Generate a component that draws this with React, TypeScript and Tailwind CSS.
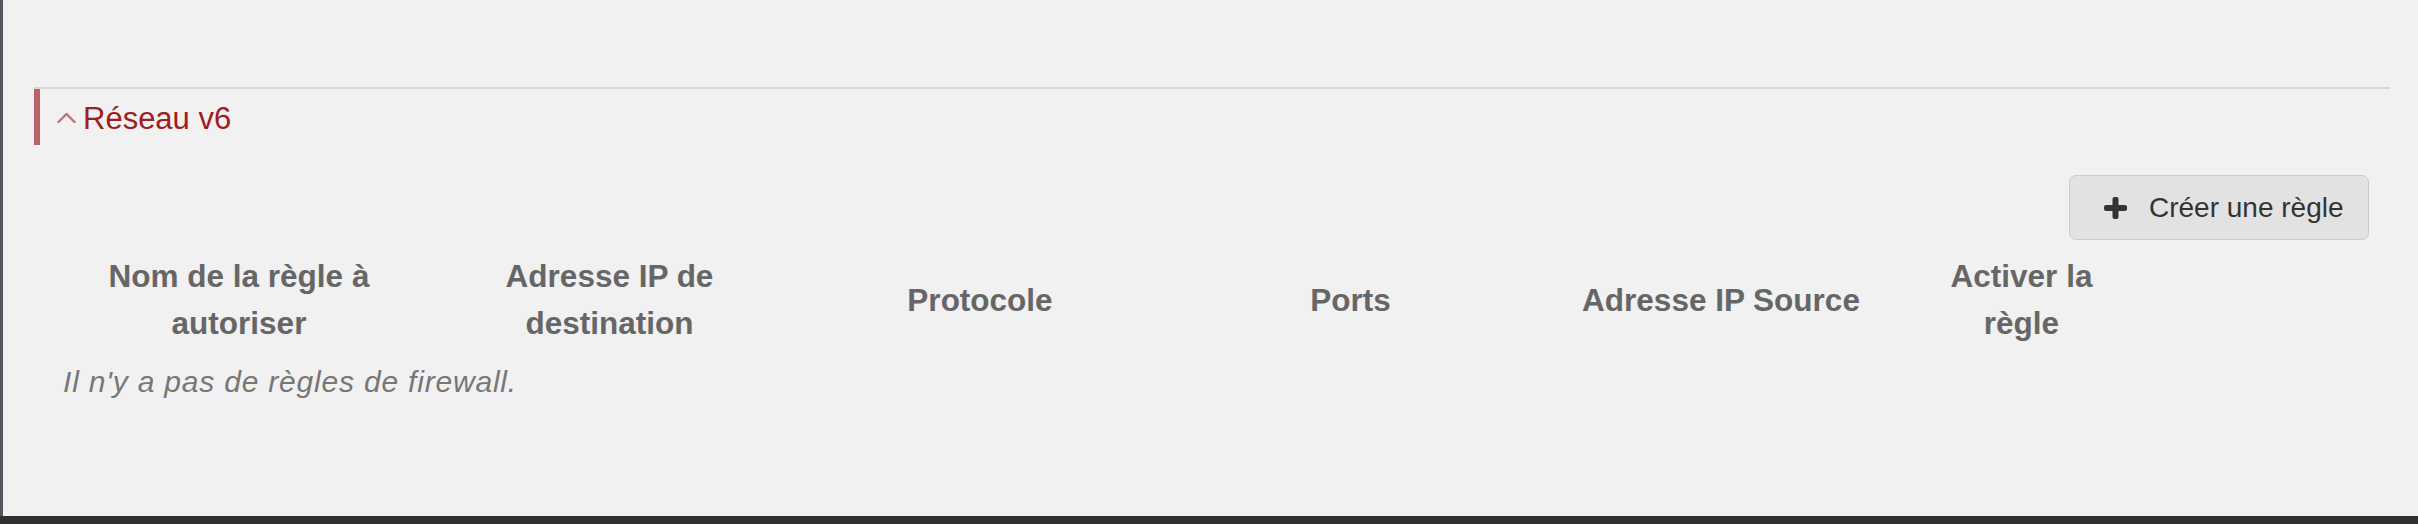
import React from "react";

const headers: string[] = [
  "Nom de la règle à autoriser",
  "Adresse IP de destination",
  "Protocole",
  "Ports",
  "Adresse IP Source",
  "Activer la règle",
  "",
];

function PlusIcon() {
  return (
    <svg width="23" height="22" viewBox="0 0 23 22" aria-hidden="true">
      <rect x="8.5" y="0" width="6" height="22" rx="2" fill="#333333" />
      <rect x="0" y="8" width="23" height="6" rx="2" fill="#333333" />
    </svg>
  );
}

function Chevron() {
  return (
    <svg width="19" height="12" viewBox="0 0 19 12" aria-hidden="true">
      <polyline
        points="1.5,10 9.5,2 17.5,10"
        fill="none"
        stroke="#c0727a"
        strokeWidth="2.4"
        strokeLinecap="round"
        strokeLinejoin="round"
      />
    </svg>
  );
}

export default function App() {
  return (
    <div
      className="flex h-[524px] w-full flex-col overflow-hidden bg-[#f1f1f1]"
      style={{ fontFamily: '"Liberation Sans", Arial, sans-serif' }}
    >
      <div className="flex min-h-0 flex-1">
        <div className="w-[3px] shrink-0 bg-[#55555d]" />
        <div className="flex min-w-0 flex-1 flex-col pl-[31px] pr-[28px] pt-[87px]">
          <div className="h-[2px] w-full bg-[#d9d9d9]" />
          <div className="flex h-[56px] items-center border-l-[6px] border-[#b9626a] pl-[17px]">
            <div className="mt-[1px] flex items-center">
              <Chevron />
            </div>
            <span className="ml-[7px] mt-[2px] text-[31px] leading-none text-[#9e1c22]">
              Réseau v6
            </span>
          </div>
          <div className="flex flex-col px-[20px] pr-[21px]">
            <div className="mt-[30px] flex justify-end">
              <button className="flex h-[65px] w-[300px] items-center rounded-[7px] border border-[#cbcbcb] bg-[#e2e2e2] pl-[34px] text-[28px] text-[#333333]">
                <PlusIcon />
                <span className="ml-[22px] whitespace-nowrap">Créer une règle</span>
              </button>
            </div>
            <div className="mt-[13px] grid grid-cols-[370px_371px_370px_371px_370px_231px_1fr] items-center">
              {headers.map((h, i) => (
                <div
                  key={i}
                  className="px-[8px] text-center text-[31.5px] font-bold leading-[47px] text-[#666666]"
                >
                  {h}
                </div>
              ))}
            </div>
            <div className="mt-[12px] pl-[9px] text-[30px] italic leading-[45px] tracking-[0.8px] text-[#777777]">
              Il n'y a pas de règles de firewall.
            </div>
          </div>
        </div>
      </div>
      <div className="h-[8px] w-full shrink-0 bg-[#303033]" />
    </div>
  );
}
